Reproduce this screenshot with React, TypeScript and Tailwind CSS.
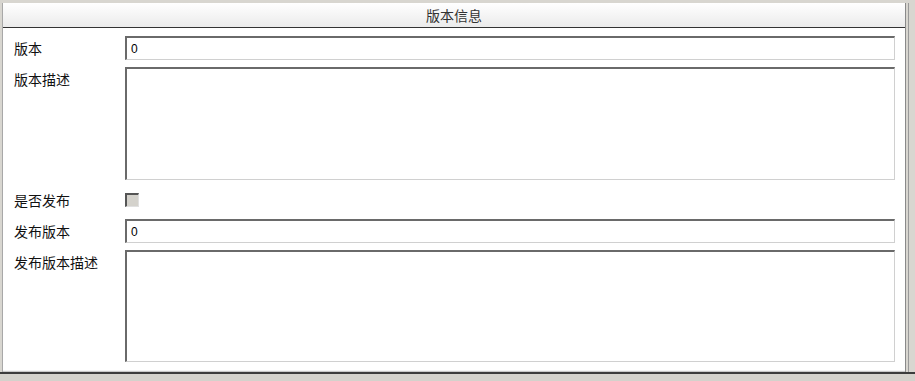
const cjk = { fontFamily: '"Noto Sans CJK SC", "Noto Sans", sans-serif' };

function TextInput({ value }: { value: string }) {
  return (
    <div className="flex h-[24px] flex-1 items-center border-t-2 border-l-2 border-b border-r border-t-[#6a6a6a] border-l-[#6a6a6a] border-b-[#d0d0d0] border-r-[#d0d0d0] bg-white pl-[4px] text-[12px] text-black" style={{ fontFamily: '"Liberation Sans", Arial, sans-serif' }}>
      {value}
    </div>
  );
}

function TextArea({ h }: { h: string }) {
  return <div className={`flex-1 border-t-2 border-l-2 border-b border-r border-t-[#6a6a6a] border-l-[#6a6a6a] border-b-[#d0d0d0] border-r-[#d0d0d0] bg-white ${h}`} />;
}

function Row({ label, top, children }: { label: string; top?: boolean; children: React.ReactNode }) {
  return (
    <div className={`flex ${top ? 'items-start' : 'items-center'}`}>
      <div className={`w-[111px] shrink-0 text-[14px] leading-[20px] text-[#111] ${top ? 'pt-[2px]' : ''}`} style={cjk}>
        {label}
      </div>
      {children}
    </div>
  );
}

export default function App() {
  return (
    <div className="flex h-[381px] w-[915px] flex-col bg-[#d8d6d0]">
      <div className="flex flex-1 pt-[3px]">
        <div className="ml-[2px] flex w-[904px] flex-col border-l border-r border-l-[#a8a8a8] border-r-[#8a8a8a] bg-white">
          <div className="flex h-[25px] items-center justify-center border-b border-b-[#333] bg-gradient-to-b from-[#ffffff] to-[#ebebeb] text-[14px] text-[#333]" style={cjk}>
            版本信息
          </div>
          <div className="flex flex-1 flex-col gap-[7px] pl-[11px] pr-[10px] pt-[8px]">
            <Row label="版本">
              <TextInput value="0" />
            </Row>
            <Row label="版本描述" top>
              <TextArea h="h-[113px]" />
            </Row>
            <Row label="是否发布">
              <div className="flex h-[25px] items-center">
                <div className="h-[14px] w-[14px] border-t-2 border-l-2 border-b border-r border-t-[#555] border-l-[#555] border-b-[#e0e0e0] border-r-[#e0e0e0] bg-[#d4d2cc]" />
              </div>
            </Row>
            <Row label="发布版本">
              <TextInput value="0" />
            </Row>
            <Row label="发布版本描述" top>
              <TextArea h="h-[112px]" />
            </Row>
          </div>
          <div className="h-px bg-[#f4f4f4]" />
          <div className="h-px bg-[#c8c8c8]" />
        </div>
        <div className="ml-[2px] w-px bg-[#9a9a9a]" />
      </div>
      <div className="h-[2px] bg-[#3c3c3c]" />
      <div className="h-[7px] bg-[#d4d2cc]" />
    </div>
  );
}
